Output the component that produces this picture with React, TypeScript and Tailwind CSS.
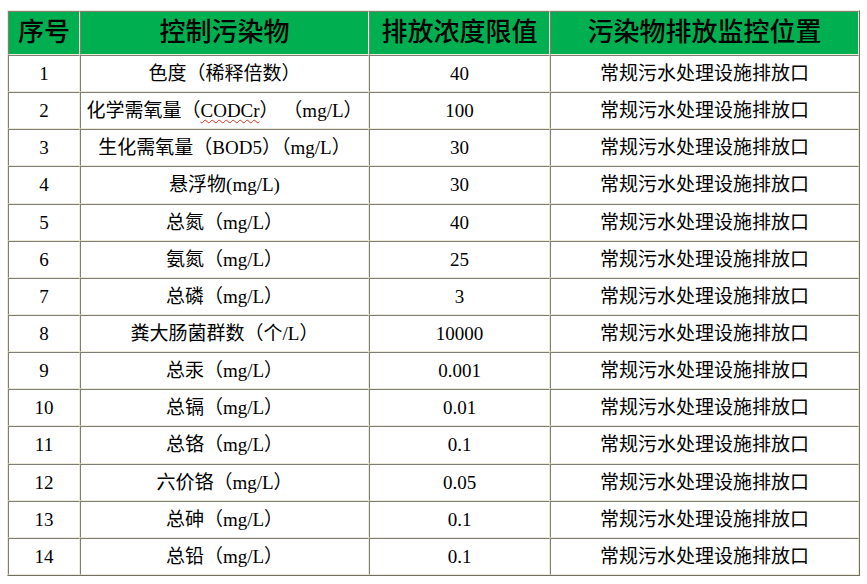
import React from "react";

interface Row {
  no: number;
  name: React.ReactNode;
  limit: string;
}

const LOCATION = "常规污水处理设施排放口";

const rows: Row[] = [
  { no: 1, name: "色度（稀释倍数）", limit: "40" },
  {
    no: 2,
    name: (
      <>
        化学需氧量（
        <span className="underline decoration-wavy decoration-[#e0301e] decoration-1 underline-offset-2">
          CODCr
        </span>
        ） （mg/L）
      </>
    ),
    limit: "100",
  },
  { no: 3, name: "生化需氧量（BOD5）（mg/L）", limit: "30" },
  { no: 4, name: "悬浮物(mg/L)", limit: "30" },
  { no: 5, name: "总氮（mg/L）", limit: "40" },
  { no: 6, name: "氨氮（mg/L）", limit: "25" },
  { no: 7, name: "总磷（mg/L）", limit: "3" },
  { no: 8, name: "粪大肠菌群数（个/L）", limit: "10000" },
  { no: 9, name: "总汞（mg/L）", limit: "0.001" },
  { no: 10, name: "总镉（mg/L）", limit: "0.01" },
  { no: 11, name: "总铬（mg/L）", limit: "0.1" },
  { no: 12, name: "六价铬（mg/L）", limit: "0.05" },
  { no: 13, name: "总砷（mg/L）", limit: "0.1" },
  { no: 14, name: "总铅（mg/L）", limit: "0.1" },
];

const cell =
  "border border-t-[#7f7d74] border-l-[#7f7d74] border-r-[#ece9d8] border-b-[#ece9d8] text-center align-middle p-0";

export default function App() {
  return (
    <div
      className="bg-white w-[867px] h-[584px] pt-[10px] pl-[7px]"
      style={{ fontFamily: '"Liberation Serif", "Noto Sans CJK SC", serif' }}>
      <table className="table-fixed border-separate border-spacing-0 border border-t-[#ece9d8] border-l-[#ece9d8] border-r-[#716f64] border-b-[#716f64] w-[853px] text-black">
        <colgroup>
          <col className="w-[72px]" />
          <col className="w-[289px]" />
          <col className="w-[181px]" />
          <col className="w-[309px]" />
        </colgroup>
        <thead>
          <tr className="h-[44px] bg-[#00b050] text-[26px] leading-none">
            <th className={cell + " font-medium"}>序号</th>
            <th className={cell + " font-medium"}>控制污染物</th>
            <th className={cell + " font-medium"}>排放浓度限值</th>
            <th className={cell + " font-medium"}>污染物排放监控位置</th>
          </tr>
        </thead>
        <tbody className="text-[19px] leading-none">
          {rows.map((r) => (
            <tr key={r.no} className="h-[37.15px]">
              <td className={cell}>{r.no}</td>
              <td className={cell + " whitespace-nowrap"}>{r.name}</td>
              <td className={cell}>{r.limit}</td>
              <td className={cell}>{LOCATION}</td>
            </tr>
          ))}
        </tbody>
      </table>
    </div>
  );
}
